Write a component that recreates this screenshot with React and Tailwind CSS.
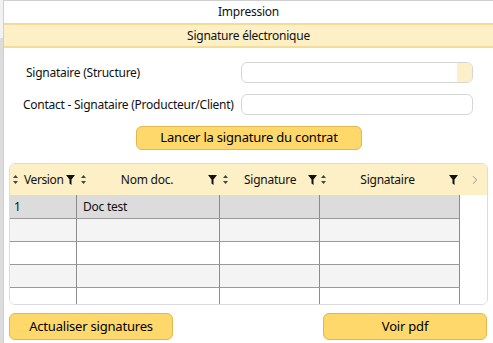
import { ChevronRight } from 'lucide-react';

const FilterIcon = () => (
    <svg width="9" height="10" viewBox="0 0 9 10" className="shrink-0">
        <path d="M0 0 H9 L5.5 4.5 V10 L3.5 8.5 V4.5 Z" fill="#111" />
    </svg>
);

const SortIcon = () => (
    <svg width="5" height="9" viewBox="0 0 5 9" className="shrink-0">
        <path d="M2.5 0 L5 3 H0 Z M2.5 9 L0 6 H5 Z" fill="#444" />
    </svg>
);

const rows = [
    { version: '1', nom: 'Doc test', bg: 'bg-[#dcdcdc]' },
    { version: '', nom: '', bg: 'bg-[#f4f4f4]' },
    { version: '', nom: '', bg: 'bg-white' },
    { version: '', nom: '', bg: 'bg-[#f4f4f4]' },
    { version: '', nom: '', bg: 'bg-white' },
];

const Button = ({ children, className }) => (
    <button
        type="button"
        className={`rounded-md border border-[#e3b64e] bg-[#fed86a] text-[13px] tracking-[-0.2px] text-black ${className}`}
    >
        {children}
    </button>
);

export default function App() {
    return (
        <div className="flex h-[343px] w-[493px] overflow-hidden bg-white font-['Noto_Sans',sans-serif] text-[12px] tracking-[-0.25px] text-[#111]">
            <div className="flex w-[3px] flex-col bg-[#dcdcdc]">
                <div className="h-[38px] bg-[#f2f2f2]" />
            </div>
            <div className="flex flex-1 flex-col border-l border-t border-[#cfcfcf]">
                <div className="flex h-[22px] items-center justify-center">Impression</div>
                <div className="flex h-[25px] items-center justify-center border-y-2 border-[#f3dc95] bg-[#fdf0c6]">
                    Signature électronique
                </div>

                <div className="mt-[14px] flex h-[21px] items-center">
                    <span className="ml-[22px] w-[215px] whitespace-nowrap">Signataire (Structure)</span>
                    <div className="flex h-[21px] w-[232px] overflow-hidden rounded-md border border-[#d6d6d6]">
                        <div className="flex-1" />
                        <div className="w-[15px] bg-[#fdefc8]" />
                    </div>
                </div>
                <div className="mt-[11px] flex h-[21px] items-center">
                    <span className="ml-[19px] w-[218px] whitespace-nowrap">Contact - Signataire (Producteur/Client)</span>
                    <div className="h-[21px] w-[232px] rounded-md border border-[#d6d6d6]" />
                </div>

                <div className="mt-[11px] flex">
                    <Button className="ml-[132px] h-[24px] w-[226px]">Lancer la signature du contrat</Button>
                </div>

                <div className="ml-[5px] mt-[13px] h-[142px] w-[479px] overflow-hidden rounded-md border border-[#dcdcdc]">
                    <div className="grid h-[31px] grid-cols-[67px_143px_100px_140px_1fr] items-center bg-[#fdf0c6]">
                        <div className="flex items-center pl-[3px]">
                            <SortIcon />
                            <span className="ml-[6px] whitespace-nowrap tracking-[-0.4px]">Version</span>
                            <span className="ml-[3px]"><FilterIcon /></span>
                        </div>
                        <div className="flex items-center pl-[4px] pr-[3px]">
                            <SortIcon />
                            <span className="flex-1 text-center">Nom doc.</span>
                            <FilterIcon />
                        </div>
                        <div className="flex items-center pl-[3px] pr-[3px]">
                            <SortIcon />
                            <span className="ml-[16px] flex-1">Signature</span>
                            <FilterIcon />
                        </div>
                        <div className="flex items-center pl-[1px] pr-[2px]">
                            <SortIcon />
                            <span className="flex-1 text-center">Signataire</span>
                            <FilterIcon />
                        </div>
                        <div className="flex items-center justify-end pr-[5px]">
                            <ChevronRight size={14} strokeWidth={1.5} className="text-[#888]" />
                        </div>
                    </div>
                    {rows.map((row, i) => {
                        const line = i === 0 ? '' : 'border-t border-t-[#9a9a9a]';
                        return (
                            <div key={i} className="grid h-[23px] grid-cols-[67px_143px_100px_140px_1fr]">
                                <div className={`${row.bg} ${line} flex items-center border-r border-r-[#8c8c8c] pl-[4px]`}>{row.version}</div>
                                <div className={`${row.bg} ${line} flex items-center border-r border-r-[#8c8c8c] pl-[6px]`}>{row.nom}</div>
                                <div className={`${row.bg} ${line} border-r border-r-[#8c8c8c]`} />
                                <div className={`${row.bg} ${line} border-r border-r-[#8c8c8c]`} />
                                <div className="bg-white" />
                            </div>
                        );
                    })}
                </div>

                <div className="ml-[5px] mt-[8px] flex w-[478px] justify-between">
                    <Button className="h-[27px] w-[164px]">Actualiser signatures</Button>
                    <Button className="h-[27px] w-[164px]">Voir pdf</Button>
                </div>
            </div>
        </div>
    );
}
